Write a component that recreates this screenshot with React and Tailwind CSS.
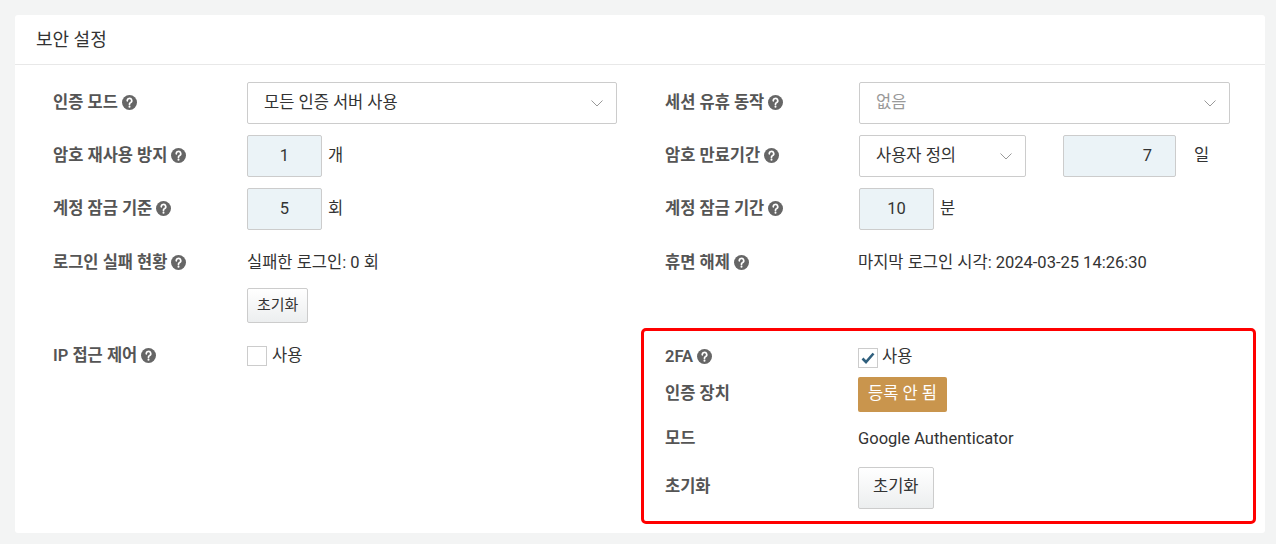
import React from 'react';

const Help = () => (
    <svg className="inline-block ml-1 w-[15px] h-[15px] align-[-2px]" viewBox="0 0 16 16">
        <circle cx="8" cy="8" r="8" fill="#666" />
        <path d="M5.6 6.2a2.4 2.4 0 1 1 3.4 2.1c-.7.3-1 .7-1 1.4v.4" stroke="#fff" strokeWidth="1.8" fill="none" strokeLinecap="round" />
        <circle cx="8" cy="12.4" r="1.1" fill="#fff" />
    </svg>
);

const Chevron = () => (
    <svg className="w-[14px] h-[14px]" viewBox="0 0 14 14" fill="none" stroke="#999" strokeWidth="1">
        <path d="M1.5 4.5 7 10l5.5-5.5" />
    </svg>
);

const Select = ({ value, muted, w }) => (
    <div className={`h-[42px] ${w} border border-[#ccc] rounded-[2px] bg-white flex items-center justify-between pl-4 pr-3 ${muted ? 'text-[#999]' : 'text-[#333]'}`}>
        <span>{value}</span>
        <Chevron />
    </div>
);

const NumBox = ({ value, w = 'w-[75px]', align = 'justify-center' }) => (
    <div className={`h-[42px] ${w} border border-[#ccc] rounded-[2px] bg-[#ebf3f7] flex items-center ${align} text-[#333]`}>{value}</div>
);

const Btn = ({ children }) => (
    <div className="h-[35px] px-[9px] border border-[#ccc] rounded-[2px] bg-gradient-to-b from-white to-[#eceeef] flex items-center text-[15px] text-[#333]">{children}</div>
);

const Row = ({ label, help = true, children, h = 'h-[42px]' }) => (
    <div className={`flex items-center ${h}`}>
        <div className="w-[194px] shrink-0 font-semibold text-[#555]">{label}{help && <Help />}</div>
        <div className="flex items-center gap-[6px]">{children}</div>
    </div>
);

const Check = ({ on }) => (
    <div className="w-[20px] h-[20px] border border-[#ccc] bg-white flex items-center justify-center">
        {on && (
            <svg className="w-[16px] h-[16px]" viewBox="0 0 16 16" fill="none" stroke="#2f5f7d" strokeWidth="2.6">
                <path d="M2.5 8.5 6 12l7.5-8.5" />
            </svg>
        )}
    </div>
);

export default function App() {
    return (
        <div className="min-h-[544px] bg-[#f3f4f4] p-[15px] text-[16.5px]" style={{ fontFamily: 'Roboto, "Noto Sans CJK KR", sans-serif' }}>
            <div className="w-[1250px] bg-white rounded-[3px] pb-[9px]">
                <div className="h-[50px] border-b border-[#e8e8e8] flex items-center pl-[21px] text-[18px] text-[#333]">보안 설정</div>
                <div className="grid grid-cols-[603px_615px] pl-[23px] pt-[17px]">
                    <div className="pl-[15px] flex flex-col">
                        <div className="flex flex-col gap-[11px]">
                            <Row label="인증 모드"><Select value="모든 인증 서버 사용" w="w-[370px]" /></Row>
                            <Row label="암호 재사용 방지"><NumBox value="1" /><span className="text-[#333]">개</span></Row>
                            <Row label="계정 잠금 기준"><NumBox value="5" /><span className="text-[#333]">회</span></Row>
                        </div>
                        <div className="flex mt-[21px]">
                            <div className="w-[194px] shrink-0 font-semibold text-[#555]">로그인 실패 현황<Help /></div>
                            <div className="flex flex-col items-start gap-[12px] text-[#333]">
                                <span>실패한 로그인: 0 회</span>
                                <Btn>초기화</Btn>
                            </div>
                        </div>
                        <div className="flex mt-[21px]">
                            <div className="w-[194px] shrink-0 font-semibold text-[#555]">IP 접근 제어<Help /></div>
                            <div className="flex items-center gap-[5px] text-[#333]"><Check /><span>사용</span></div>
                        </div>
                    </div>
                    <div className="flex flex-col">
                        <div className="pl-[24px] flex flex-col gap-[11px]">
                            <Row label="세션 유휴 동작"><Select value="없음" muted w="w-[371px]" /></Row>
                            <Row label="암호 만료기간">
                                <Select value="사용자 정의" w="w-[167px]" />
                                <div className="w-[25px]" />
                                <NumBox value="7" w="w-[113px]" align="justify-end pr-[23px]" />
                                <span className="ml-[12px] text-[#333]">일</span>
                            </Row>
                            <Row label="계정 잠금 기간"><NumBox value="10" /><span className="text-[#333]">분</span></Row>
                            <div className="flex mt-[10px]">
                                <div className="w-[193px] shrink-0 font-semibold text-[#555]">휴면 해제<Help /></div>
                                <span className="text-[#333]">마지막 로그인 시각: 2024-03-25 14:26:30</span>
                            </div>
                        </div>
                        <div className="mt-[52px] border-[3px] border-[#f00] rounded-[5px] pl-[21px] pt-[14px] pb-[12px] flex flex-col">
                            <div className="flex items-center h-[26px]">
                                <div className="w-[193px] shrink-0 font-semibold text-[#555]">2FA<Help /></div>
                                <div className="flex items-center gap-[4px] text-[#333]"><Check on /><span>사용</span></div>
                            </div>
                            <div className="flex items-center h-[35px] mt-[6px]">
                                <div className="w-[193px] shrink-0 font-semibold text-[#555]">인증 장치</div>
                                <div className="h-[35px] px-[10px] rounded-[2px] bg-[#c9954d] text-white flex items-center">등록 안 됨</div>
                            </div>
                            <div className="flex items-center h-[26px] mt-[15px]">
                                <div className="w-[193px] shrink-0 font-semibold text-[#555]">모드</div>
                                <span className="text-[#333]">Google Authenticator</span>
                            </div>
                            <div className="flex items-center h-[42px] mt-[14px]">
                                <div className="w-[193px] shrink-0 font-semibold text-[#555]">초기화</div>
                                <div className="h-[42px] px-[14px] border border-[#ccc] rounded-[2px] bg-gradient-to-b from-white to-[#eceeef] flex items-center text-[#333]">초기화</div>
                            </div>
                        </div>
                    </div>
                </div>
            </div>
        </div>
    );
}
